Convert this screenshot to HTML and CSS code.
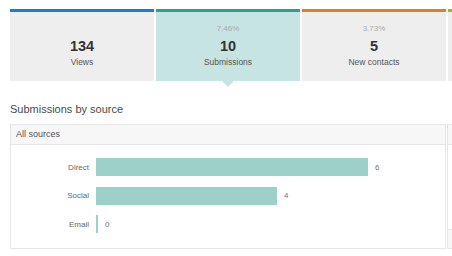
FILE: index.html
```html
<!DOCTYPE html>
<html lang="en">
<head>
  <meta charset="UTF-8">
  <title>Submissions</title>
  <link rel="stylesheet" href="styles.css">
</head>
<body>

  <div class="page">
    <div class="tiles">
      <div class="tile views">
        <span class="pct"></span>
        <span class="num">134</span>
        <span class="label">Views</span>
      </div>
      <div class="tile submissions active">
        <span class="pct">7.46%</span>
        <span class="num">10</span>
        <span class="label">Submissions</span>
      </div>
      <div class="tile contacts">
        <span class="pct">3.73%</span>
        <span class="num">5</span>
        <span class="label">New contacts</span>
      </div>
      <div class="tile customers"></div>
    </div>

    <h2>Submissions by source</h2>

    <div class="panels">
      <div class="panel">
        <div class="panel-head">All sources</div>
        <div class="chart">
          <div class="row">
            <span class="name">Direct</span>
            <span class="bar" style="width: 272px"></span>
            <span class="value">6</span>
          </div>
          <div class="row">
            <span class="name">Social</span>
            <span class="bar" style="width: 181px"></span>
            <span class="value">4</span>
          </div>
          <div class="row">
            <span class="name">Email</span>
            <span class="bar" style="width: 2px"></span>
            <span class="value">0</span>
          </div>
        </div>
      </div>
      <div class="panel side">
        <div class="panel-head"></div>
        <div class="side-body"></div>
        <div class="side-foot"></div>
      </div>
    </div>
  </div>

</body>
</html>
```

FILE: styles.css
```css
body {
  margin: 0;
  background: #fff;
  font-family: "Liberation Sans", Arial, sans-serif;
  color: #333;
  overflow: hidden;
}
.page {
  padding: 9px 0 0 10px;
  width: 700px;
}
.tiles {
  display: flex;
  gap: 2px;
}
.tile {
  position: relative;
  box-sizing: border-box;
  width: 144px;
  height: 72px;
  padding-top: 12px;
  background: #eeeeee;
  border-top: 3px solid #1c7dc0;
  display: flex;
  flex-direction: column;
  align-items: center;
}
.tile.submissions {
  border-top-color: #2f9e8c;
}
.tile.contacts {
  border-top-color: #d9812a;
}
.tile.customers {
  border-top-color: #a3b128;
}
.tile.active {
  background: #c6e4e2;
}
.tile.active::after {
  content: "";
  position: absolute;
  left: 50%;
  bottom: -6px;
  margin-left: -6px;
  border-left: 6px solid transparent;
  border-right: 6px solid transparent;
  border-top: 6px solid #c6e4e2;
}
.pct {
  font-size: 8px;
  line-height: 10px;
  height: 10px;
  color: #a9a9a9;
}
.num {
  margin-top: 4px;
  font-size: 14.5px;
  line-height: 17px;
  font-weight: bold;
  color: #333;
}
.label {
  margin-top: 2px;
  font-size: 8.5px;
  line-height: 10px;
  color: #555;
}
h2 {
  margin: 21px 0 8px;
  font-size: 11px;
  line-height: 14px;
  font-weight: normal;
  color: #4a4a4a;
}
.panels {
  display: flex;
  gap: 1px;
}
.panel {
  box-sizing: border-box;
  width: 436px;
  border: 1px solid #e6e6e6;
  display: flex;
  flex-direction: column;
}
.panel-head {
  height: 19px;
  line-height: 19px;
  padding-left: 5px;
  background: #f7f7f7;
  border-bottom: 1px solid #e6e6e6;
  font-size: 9px;
  color: #555;
}
.chart {
  padding: 13px 0 15px;
  display: flex;
  flex-direction: column;
  gap: 10.5px;
}
.row {
  display: flex;
  align-items: center;
  height: 18px;
}
.name {
  width: 78px;
  text-align: right;
  font-size: 8px;
  color: #666;
}
.bar {
  margin-left: 7px;
  height: 18px;
  background: #9dd0c8;
}
.value {
  margin-left: 7px;
  font-size: 8px;
  color: #777;
}
.side {
  width: 200px;
}
.side-body {
  flex: 1;
}
.side-foot {
  height: 18px;
  background: #f7f7f7;
  border-top: 1px solid #e6e6e6;
}
```
